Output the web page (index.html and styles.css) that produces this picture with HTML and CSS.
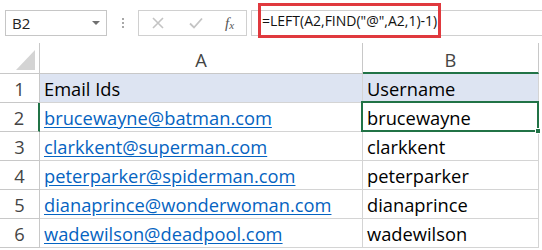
FILE: index.html
```html
<!DOCTYPE html>
<html>
<head>
<meta charset="utf-8">
<link rel="stylesheet" href="styles.css">
</head>
<body>
<div class="app">
  <div class="toolbar">
    <div class="namebox"><span class="ref">B2</span><span class="caret"></span></div>
    <div class="dots"><i></i><i></i><i></i></div>
    <div class="fbtns">
      <svg class="ico" width="12" height="12" viewBox="0 0 12 12"><path d="M1 1 L11 11 M11 1 L1 11" stroke="#c4c4c4" stroke-width="1.6" fill="none"/></svg>
      <svg class="ico" width="14" height="12" viewBox="0 0 14 12"><path d="M1 6.5 L5 10.5 L13 1.5" stroke="#c4c4c4" stroke-width="1.8" fill="none"/></svg>
      <span class="fx">f<sub>x</sub></span>
    </div>
    <div class="formula"><span class="hl">=LEFT(A2,FIND("@",A2,1)-1)</span></div>
  </div>
  <div class="sheet">
    <div class="c corner"><span class="tri"></span></div>
    <div class="c colh">A</div>
    <div class="c colh sel">B</div>

    <div class="c rowh">1</div>
    <div class="c cell head">Email Ids</div>
    <div class="c cell head">Username</div>

    <div class="c rowh sel">2</div>
    <div class="c cell"><span class="link">brucewayne@batman.com</span></div>
    <div class="c cell active">brucewayne<span class="selbox"><span class="handle"></span></span></div>

    <div class="c rowh">3</div>
    <div class="c cell"><span class="link">clarkkent@superman.com</span></div>
    <div class="c cell">clarkkent</div>

    <div class="c rowh">4</div>
    <div class="c cell"><span class="link">peterparker@spiderman.com</span></div>
    <div class="c cell">peterparker</div>

    <div class="c rowh">5</div>
    <div class="c cell"><span class="link">dianaprince@wonderwoman.com</span></div>
    <div class="c cell">dianaprince</div>

    <div class="c rowh">6</div>
    <div class="c cell"><span class="link">wadewilson@deadpool.com</span></div>
    <div class="c cell">wadewilson</div>
  </div>
</div>
</body>
</html>
```

FILE: styles.css
```css
* { box-sizing: border-box; }
html, body { margin: 0; padding: 0; background: #fff; }
body { width: 542px; height: 250px; overflow: hidden; font-family: "Open Sans", "Liberation Sans", sans-serif; }

.toolbar {
  height: 43px;
  display: flex;
  align-items: flex-start;
  padding-top: 10px;
}
.namebox {
  margin-left: 5px;
  width: 102px;
  height: 26px;
  border: 1px solid #c6c6c6;
  display: flex;
  align-items: center;
  justify-content: space-between;
  padding: 0 6px 0 6px;
}
.ref { font-size: 15px; color: #222; }
.caret {
  width: 0; height: 0;
  border-left: 4px solid transparent;
  border-right: 4px solid transparent;
  border-top: 4px solid #707070;
}
.dots {
  width: 31px;
  height: 26px;
  display: flex;
  flex-direction: column;
  align-items: center;
  justify-content: center;
  gap: 2px;
}
.dots i { display: block; width: 2px; height: 2px; background: #a8a8a8; }
.fbtns {
  width: 109px;
  height: 26px;
  border: 1px solid #d0d0d0;
  display: flex;
  align-items: center;
  padding-left: 13px;
}
.fbtns .ico:nth-child(1) { margin-right: 25px; }
.fbtns .ico:nth-child(2) { margin-right: 22px; }
.fx {
  font-family: "Liberation Serif", serif;
  font-style: italic;
  font-size: 15px;
  color: #555;
  line-height: 1;
}
.fx sub { font-size: 11px; vertical-align: -1px; }
.formula {
  flex: 1;
  margin-left: 4px;
  height: 26px;
  border-top: 1px solid #d0d0d0;
  border-bottom: 1px solid #d0d0d0;
  border-left: 1px solid #d0d0d0;
  display: flex;
  align-items: flex-start;
}
.hl {
  margin-top: -8px;
  margin-left: 6px;
  width: 183px;
  height: 35px;
  border: 3px solid #e0393e;
  display: flex;
  align-items: center;
  padding-left: 1px;
  font-size: 14px;
  color: #111;
  white-space: nowrap;
}

.sheet {
  display: grid;
  grid-template-columns: 40px 323px 176px;
  grid-template-rows: 31px repeat(6, 29px);
}
.c {
  border-right: 1px solid #d4d4d4;
  border-bottom: 1px solid #d4d4d4;
  display: flex;
  align-items: center;
  font-size: 18.3px;
  white-space: nowrap;
}
.corner { border-color: #c8c8c8; align-items: flex-end; justify-content: flex-end; padding: 0 4px 3px 0; }
.tri {
  width: 19px; height: 20px;
  background: #d4d4d4;
  clip-path: polygon(100% 0, 100% 100%, 0 100%);
}
.colh {
  justify-content: center;
  color: #444;
  border-color: #c8c8c8;
  align-items: flex-end;
  padding-bottom: 1px;
}
.colh.sel { border-bottom: 2px solid #217346; padding-bottom: 0; }
.rowh {
  justify-content: center;
  color: #444;
  border-color: #c8c8c8;
}
.rowh.sel { border-right: 2px solid #217346; }
.cell { padding-left: 4px; color: #000; overflow: visible; }
.head { background: #dde4f2; }
.link { color: #0563c1; text-decoration: underline; text-underline-offset: 2px; }
.active { position: relative; }
.selbox {
  position: absolute;
  left: -2px; top: -2px;
  width: 178px; height: 31px;
  border: 2px solid #217346;
}
.handle {
  position: absolute;
  right: -4px; bottom: -4px;
  width: 6px; height: 6px;
  background: #217346;
  border: 1px solid #fff;
}
```
